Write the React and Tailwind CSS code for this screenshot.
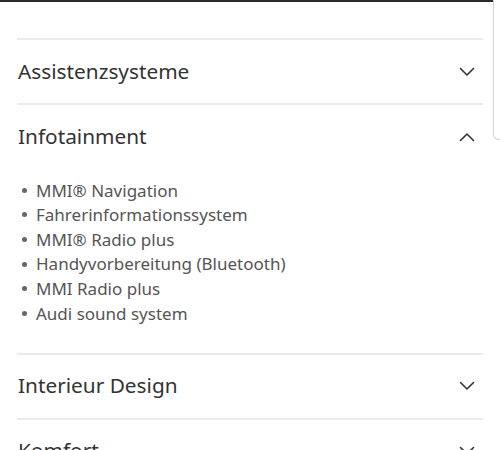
import { useState } from 'react'

const sections = [
  { title: 'Assistenzsysteme', items: [] },
  {
    title: 'Infotainment',
    items: [
      'MMI® Navigation',
      'Fahrerinformationssystem',
      'MMI® Radio plus',
      'Handyvorbereitung (Bluetooth)',
      'MMI Radio plus',
      'Audi sound system',
    ],
  },
  { title: 'Interieur Design', items: [] },
  { title: 'Komfort', items: [] },
]

function Chevron({ up }) {
  return (
    <svg width="16" height="10" viewBox="0 0 16 10" fill="none" className="shrink-0">
      <path
        d={up ? 'M1.5 8.5 L8 2 L14.5 8.5' : 'M1.5 1.5 L8 8 L14.5 1.5'}
        stroke="#333"
        strokeWidth="1.6"
        strokeLinecap="round"
        strokeLinejoin="round"
      />
    </svg>
  )
}

export default function App() {
  const [open, setOpen] = useState('Infotainment')

  return (
    <div className="relative h-[450px] w-[500px] overflow-hidden bg-white font-['Noto_Sans',sans-serif]">
      <div className="h-[2px] w-full bg-[#2a2a2a]" />
      <div className="absolute right-0 top-0 h-[140px] w-[7px] rounded-bl-md border-b border-l border-[#d4d4d4] bg-white" />

      <div className="pl-[17px] pr-[17px] pt-[36px]">
        {sections.map((s) => {
          const isOpen = open === s.title
          return (
            <div key={s.title} className="border-t-2 border-[#ebebeb]">
              <button
                onClick={() => setOpen(isOpen ? null : s.title)}
                className="flex h-[63px] w-full items-center justify-between pl-px pr-[8px] text-left"
              >
                <span className="text-[20.8px] text-[#333333]">{s.title}</span>
                <Chevron up={isOpen} />
              </button>
              {isOpen && s.items.length > 0 && (
                <ul className="pb-[27px] pt-[10px]">
                  {s.items.map((it) => (
                    <li key={it} className="flex h-[24.6px] items-center text-[17px] text-[#555555]">
                      <span className="ml-[5px] mr-[9px] h-[5px] w-[5px] shrink-0 rounded-full bg-[#666666]" />
                      {it}
                    </li>
                  ))}
                </ul>
              )}
            </div>
          )
        })}
      </div>
    </div>
  )
}
